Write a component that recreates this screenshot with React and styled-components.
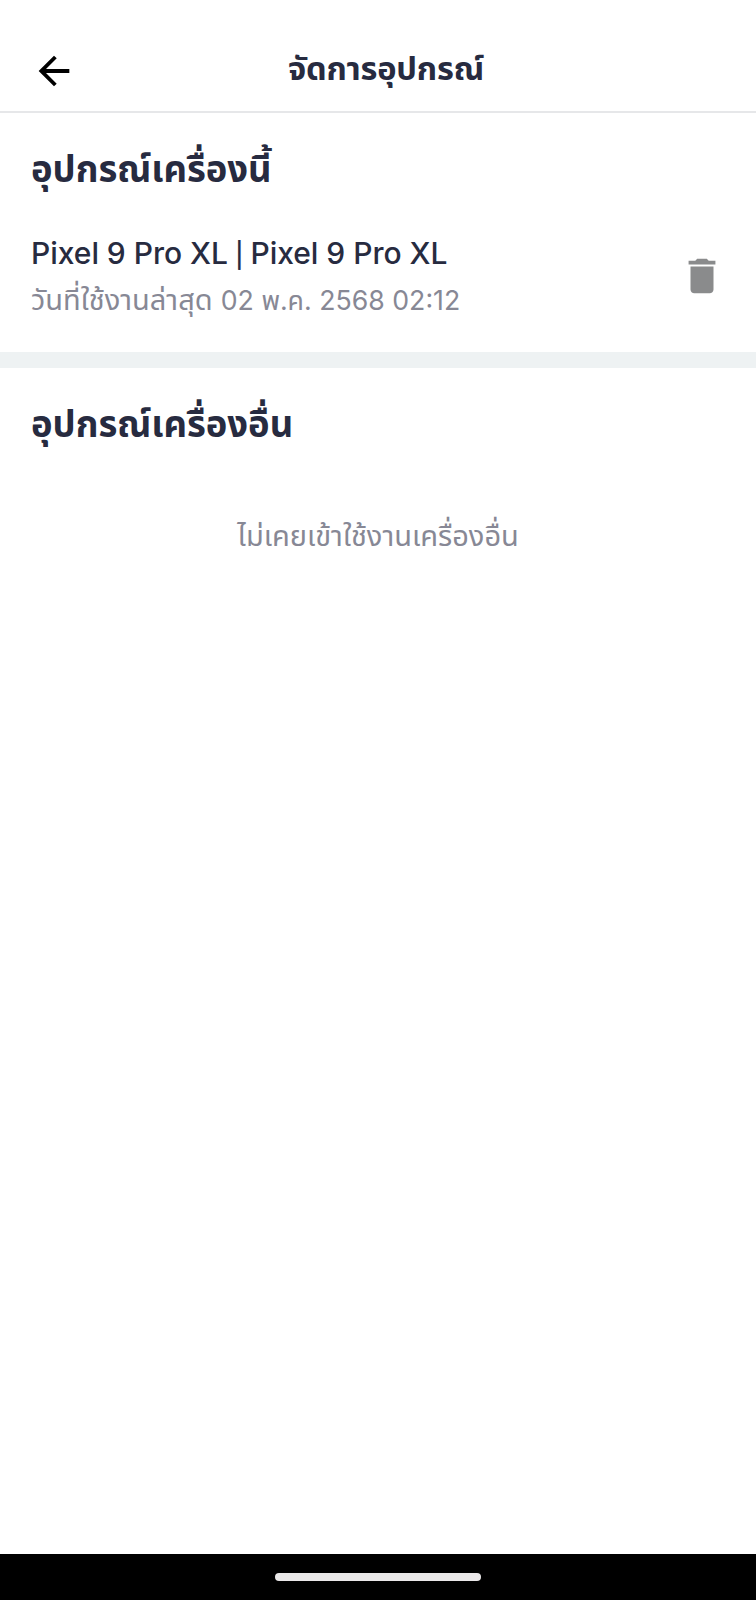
import styled, { createGlobalStyle } from "styled-components";

const GlobalStyle = createGlobalStyle`
  * {
    box-sizing: border-box;
  }
  body {
    margin: 0;
    background-color: white;
    font-family: Inter, "Noto Sans", "Noto Sans Thai", sans-serif;
  }
`;

const Screen = styled.div`
  width: 100%;
  height: 1600px;
  display: flex;
  flex-direction: column;
`;

const Header = styled.header`
  height: 113px;
  padding: 27px 31px 0;
  border-bottom: 2px solid #e6e7e9;
  display: grid;
  grid-template-columns: 45px 1fr 45px;
  align-items: center;
`;

const BackButton = styled.button`
  border: none;
  padding: 3px 0 0;
  background: none;
  display: flex;
  justify-content: center;
  align-items: center;
  svg {
    flex-shrink: 0;
  }
`;

const PageTitle = styled.h1`
  margin: 0 0 2px 16px;
  text-align: center;
  font-size: 32.6px;
  line-height: 44px;
  font-weight: 700;
  letter-spacing: -0.2px;
  color: #272b40;
  white-space: nowrap;
`;

const Section = styled.section`
  height: ${(props) => props.$height || "auto"};
  padding: 30px 31px 0;
`;

const SectionTitle = styled.h2`
  margin: 0;
  font-size: 36.4px;
  line-height: 52px;
  font-weight: 700;
  color: #272b40;
  white-space: nowrap;
`;

const Device = styled.div`
  margin-top: 31px;
  display: flex;
  justify-content: space-between;
`;

const DeviceName = styled.div`
  font-size: 30px;
  line-height: 55px;
  font-weight: 500;
  letter-spacing: -0.03px;
  color: #272b40;
`;

const Pipe = styled.span`
  margin: 0 -1px;
  font-size: 25px;
`;

const LastUsed = styled.div`
  margin-top: -1px;
  font-size: 29px;
  line-height: 36px;
  color: #878895;
  white-space: nowrap;
`;

const LastUsedDate = styled.span`
  font-size: 26.7px;
`;

const DeleteButton = styled.button`
  border: none;
  padding: 10px 0 0;
  background: none;
`;

const Divider = styled.div`
  height: 16px;
  background-color: #eef2f3;
`;

const Empty = styled.p`
  margin: 66px 0 0;
  text-align: center;
  font-size: 29px;
  line-height: 40px;
  color: #878895;
`;

const NavBar = styled.footer`
  height: 46px;
  margin-top: auto;
  background-color: black;
  display: flex;
  justify-content: center;
  align-items: center;
`;

const Handle = styled.div`
  width: 206px;
  height: 8px;
  border-radius: 4px;
  background-color: #eae8e9;
`;

function App() {
  return (
    <Screen>
      <GlobalStyle />
      <Header>
        <BackButton aria-label="ย้อนกลับ">
          <svg width="46" height="46" viewBox="0 0 24 24">
            <path d="M20 11H7.83l5.59-5.59L12 4l-8 8 8 8 1.41-1.41L7.83 13H20v-2z" />
          </svg>
        </BackButton>
        <PageTitle>จัดการอุปกรณ์</PageTitle>
      </Header>
      <Section $height="239px">
        <SectionTitle>อุปกรณ์เครื่องนี้</SectionTitle>
        <Device>
          <div>
            <DeviceName>
              Pixel 9 Pro XL <Pipe>|</Pipe> Pixel 9 Pro XL
            </DeviceName>
            <LastUsed>
              วันที่ใช้งานล่าสุด <LastUsedDate>02 พ.ค. 2568 02:12</LastUsedDate>
            </LastUsed>
          </div>
          <DeleteButton aria-label="ลบ">
            <svg width="46" height="46" viewBox="0 0 24 24" fill="#8a8b8c">
              <path d="M6 19c0 1.1.9 2 2 2h8c1.1 0 2-.9 2-2V7H6v12zM19 4h-3.5l-1-1h-5l-1 1H5v2h14V4z" />
            </svg>
          </DeleteButton>
        </Device>
      </Section>
      <Divider />
      <Section>
        <SectionTitle>อุปกรณ์เครื่องอื่น</SectionTitle>
        <Empty>ไม่เคยเข้าใช้งานเครื่องอื่น</Empty>
      </Section>
      <NavBar>
        <Handle />
      </NavBar>
    </Screen>
  );
}

export default App;
